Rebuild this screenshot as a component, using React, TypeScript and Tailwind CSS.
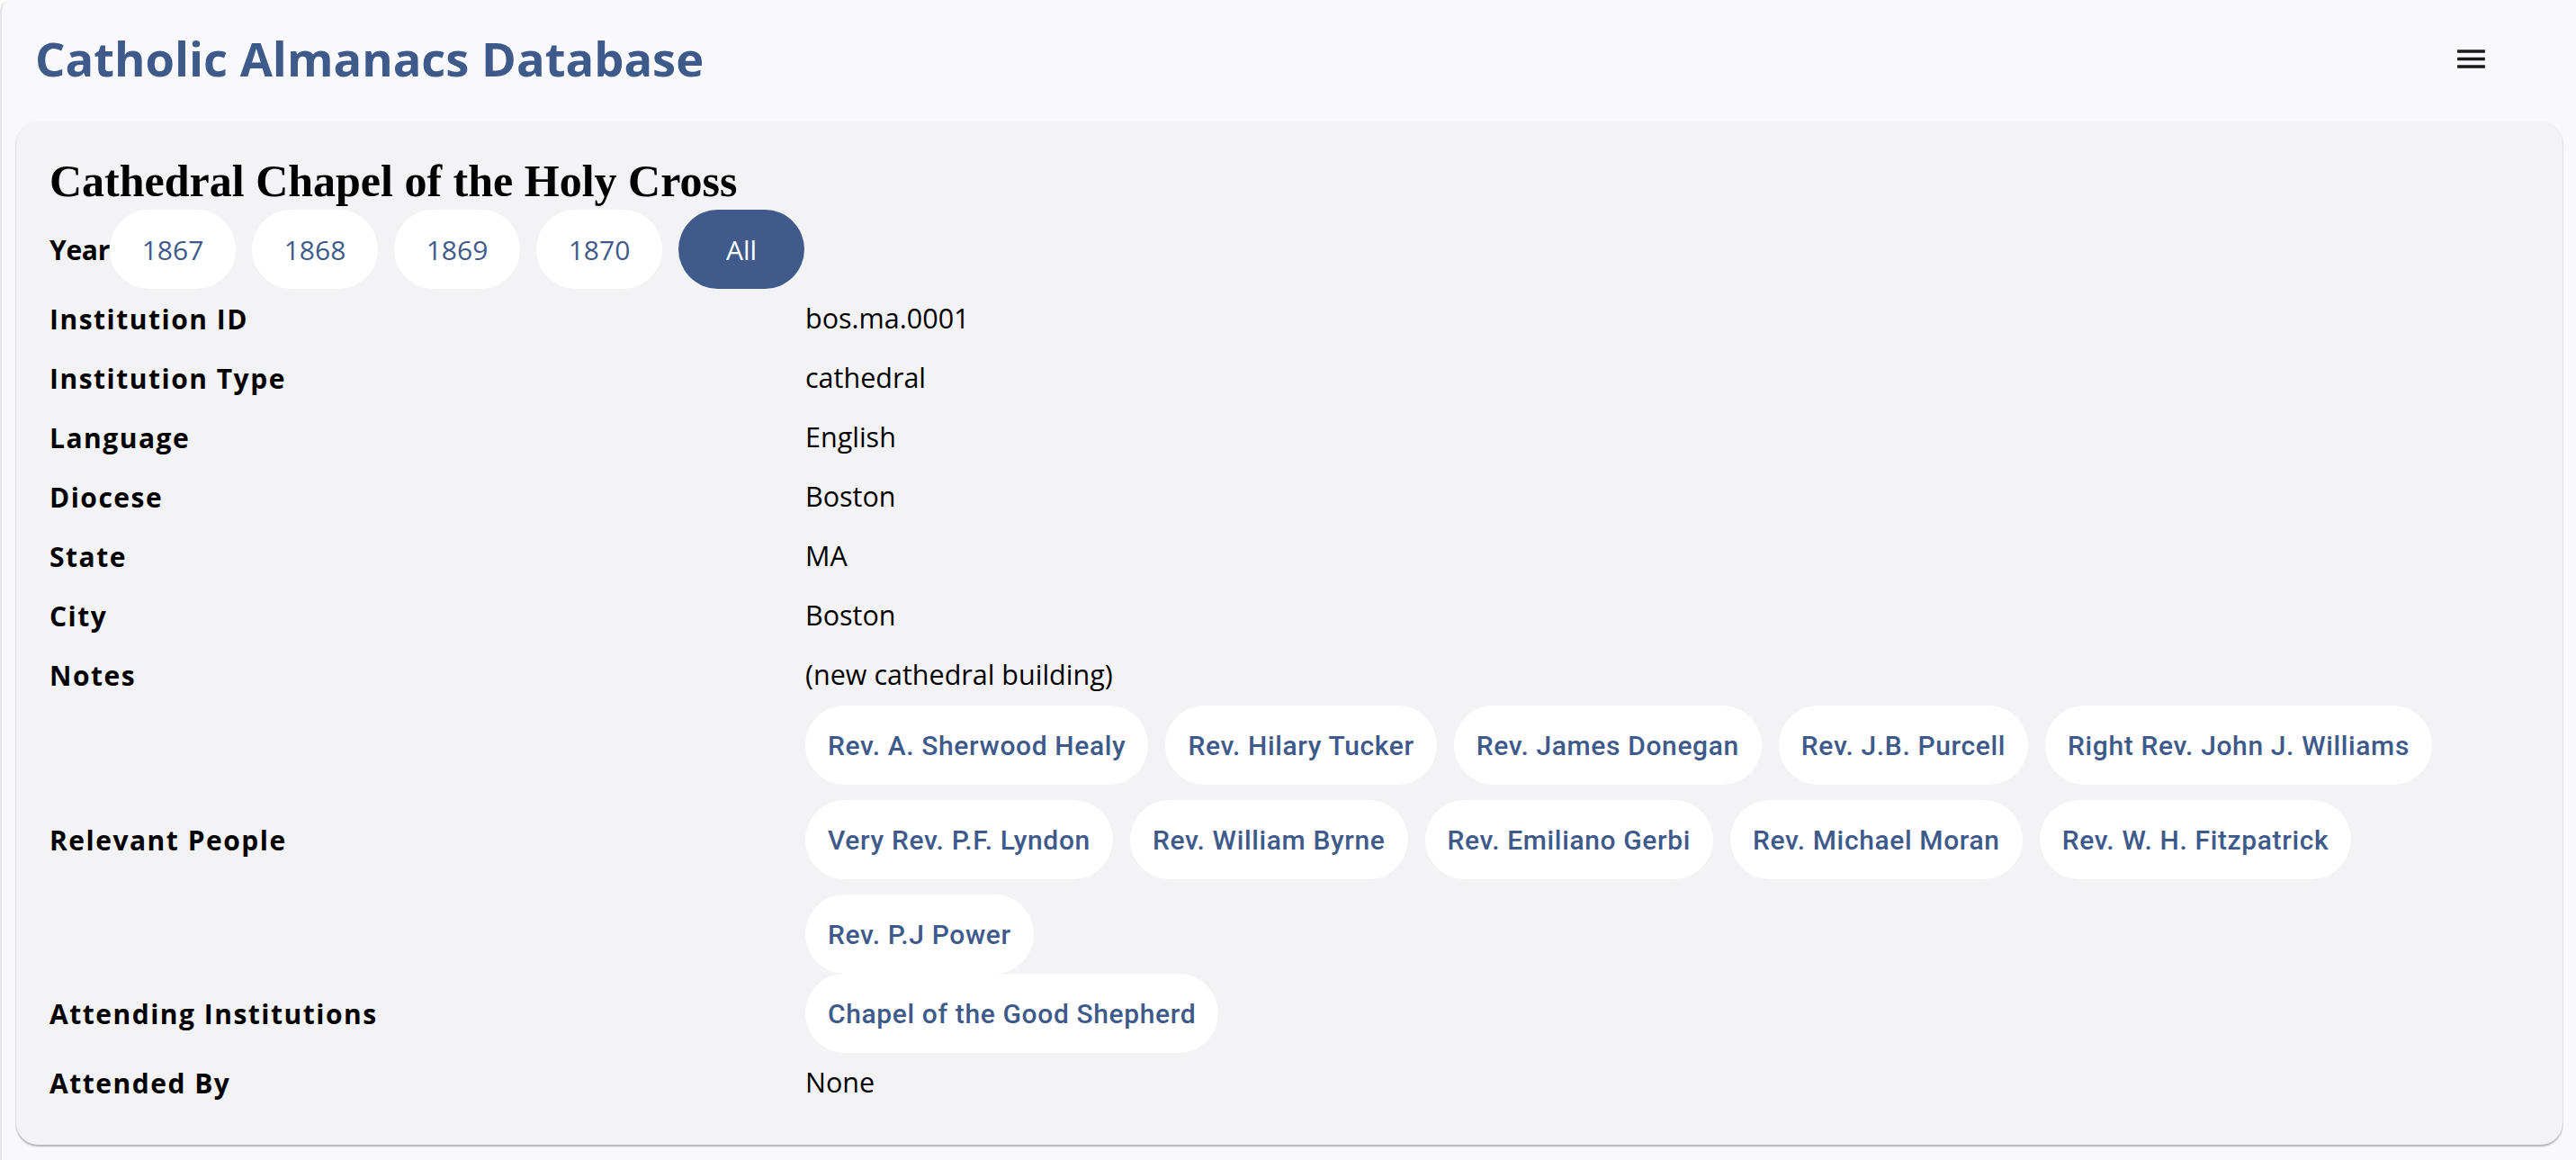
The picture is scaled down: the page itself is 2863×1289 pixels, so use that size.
const BLUE = 'text-[#3e5a8b]';

const years = ['1867', '1868', '1869', '1870'];

const facts: [string, string][] = [
  ['Institution ID', 'bos.ma.0001'],
  ['Institution Type', 'cathedral'],
  ['Language', 'English'],
  ['Diocese', 'Boston'],
  ['State', 'MA'],
  ['City', 'Boston'],
  ['Notes', '(new cathedral building)'],
];

const people = [
  'Rev. A. Sherwood Healy',
  'Rev. Hilary Tucker',
  'Rev. James Donegan',
  'Rev. J.B. Purcell',
  'Right Rev. John J. Williams',
  'Very Rev. P.F. Lyndon',
  'Rev. William Byrne',
  'Rev. Emiliano Gerbi',
  'Rev. Michael Moran',
  'Rev. W. H. Fitzpatrick',
  'Rev. P.J Power',
];

function Label({ children }: { children: React.ReactNode }) {
  return (
    <div className="w-[840px] shrink-0 font-bold tracking-[0.05em] text-black">{children}</div>
  );
}

function Chip({ label }: { label: string }) {
  return (
    <button
      className={`h-[88px] rounded-full bg-white px-[25px] font-['Roboto',sans-serif] text-[30px] font-medium tracking-[0.021em] ${BLUE}`}
    >
      {label}
    </button>
  );
}

export default function App() {
  return (
    <div className="min-h-[1289px] w-full rounded-tl-[12px] border-l-2 border-[#e4e4ea] bg-[#f9f9fd] font-['Open_Sans',sans-serif] text-[30px] text-black">
      <header className="flex h-[134px] items-start justify-between pl-[37px] pr-[96px]">
        <h1 className={`pt-[38px] text-[52.5px] leading-[53px] font-bold ${BLUE}`}>
          Catholic Almanacs Database
        </h1>
        <button className="mt-[45px] text-[#1a1a1a]">
          <svg width="41" height="41" viewBox="0 0 24 24" fill="currentColor">
            <path d="M3 18h18v-2H3zm0-5h18v-2H3zm0-7v2h18V6z" />
          </svg>
        </button>
      </header>

      <main className="mx-[16px] mt-[2px] mr-[15px] rounded-[24px] bg-[#f3f3f5] px-[37px] pt-[35px] pb-[36px] shadow-[0_2px_2px_rgba(0,0,0,0.28),0_0_3px_rgba(0,0,0,0.06)]">
        <h2 className="mb-[2px] font-['Liberation_Serif',serif] text-[50px] leading-[60px] font-bold">
          Cathedral Chapel of the Holy Cross
        </h2>

        <div className="flex h-[88px] items-center">
          <span className="font-bold tracking-[-0.01em]">Year</span>
          <div className="flex gap-[18px]">
            {years.map((y) => (
              <button key={y} className={`h-[88px] w-[140px] rounded-full bg-white ${BLUE}`}>
                {y}
              </button>
            ))}
            <button className="h-[88px] w-[140px] rounded-full bg-[#405b8b] text-white">All</button>
          </div>
        </div>

        {facts.map(([k, v]) => (
          <div key={k} className="flex h-[66px] items-center">
            <Label>{k}</Label>
            <div className="text-[30.5px]">{v}</div>
          </div>
        ))}

        <div className="flex items-center pt-[1px]">
          <Label>Relevant People</Label>
          <div className="flex flex-wrap gap-x-[19px] gap-y-[17px]">
            {people.map((p) => (
              <Chip key={p} label={p} />
            ))}
          </div>
        </div>

        <div className="flex items-center">
          <Label>Attending Institutions</Label>
          <div className="flex flex-wrap gap-[18px]">
            <Chip label="Chapel of the Good Shepherd" />
          </div>
        </div>

        <div className="flex h-[66px] items-center">
          <Label>Attended By</Label>
          <div className="text-[30.5px]">None</div>
        </div>
      </main>
    </div>
  );
}
